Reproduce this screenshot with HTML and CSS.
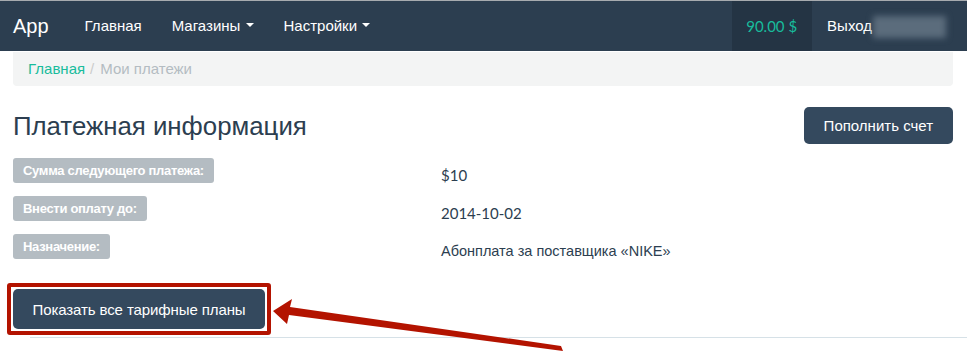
FILE: index.html
```html
<!DOCTYPE html>
<html lang="ru">
<head>
  <meta charset="UTF-8">
  <title>Мои платежи</title>
  <link rel="stylesheet" href="styles.css">
</head>
<body>
  <nav class="navbar">
    <a class="brand" href="#">App</a>
    <ul class="nav">
      <li><a href="#">Главная</a></li>
      <li><a href="#">Магазины <span class="caret"></span></a></li>
      <li><a href="#">Настройки <span class="caret"></span></a></li>
    </ul>
    <ul class="nav nav-right">
      <li class="balance"><a href="#">90.00 $</a></li>
      <li><a href="#">Выход<span class="blurred"></span></a></li>
    </ul>
  </nav>

  <div class="container">
    <ol class="breadcrumb">
      <li><a href="#">Главная</a></li>
      <li class="active">Мои платежи</li>
    </ol>

    <div class="page-head">
      <h1>Платежная информация</h1>
      <button class="btn">Пополнить счет</button>
    </div>

    <div class="details">
      <div class="label-cell"><span class="label">Сумма следующего платежа:</span></div>
      <div class="value num">$10</div>
      <div class="label-cell"><span class="label">Внести оплату до:</span></div>
      <div class="value num">2014-10-02</div>
      <div class="label-cell"><span class="label">Назначение:</span></div>
      <div class="value">Абонплата за поставщика «NIKE»</div>
    </div>

    <div class="highlight">
      <button class="btn">Показать все тарифные планы</button>
    </div>
  </div>

  <div class="rule"></div>

  <!-- annotation arrow -->
  <svg class="arrow" width="967" height="353" viewBox="0 0 967 353">
    <polygon fill="#b31300" points="273,311 292,299 290,307 561,346 563,351 289,315 287,324"/>
  </svg>
</body>
</html>
```

FILE: styles.css
```css
body {
  margin: 0;
  font-family: 'Liberation Sans', Arial, sans-serif;
  font-size: 15px;
  color: #2c3e50;
  background: #fff;
  position: relative;
  height: 353px;
  overflow: hidden;
}
a {
  text-decoration: none;
}
.navbar {
  display: flex;
  align-items: stretch;
  height: 50px;
  background: #2c3e50;
  border-top: 1px solid #a7abaf;
}
.brand {
  color: #fff;
  font-size: 20px;
  line-height: 50px;
  padding: 0 21px 0 13px;
}
.nav {
  display: flex;
  list-style: none;
  margin: 0;
  padding: 0;
}
.nav a {
  display: block;
  color: #fff;
  line-height: 50px;
  padding: 0 15px;
}
.nav-right {
  margin-left: auto;
  margin-right: 6px;
}
.balance a {
  background: #243444;
  color: #18bc9c;
  font-family: Lato, 'Liberation Sans', sans-serif;
  padding: 0 15px 0 14px;
}
.caret {
  display: inline-block;
  width: 0;
  height: 0;
  margin-left: 1px;
  vertical-align: middle;
  border-top: 4px solid #fff;
  border-left: 4px solid transparent;
  border-right: 4px solid transparent;
  position: relative;
  top: -2px;
}
.blurred {
  display: inline-block;
  width: 73px;
  height: 22px;
  margin-left: 1px;
  vertical-align: middle;
  background: #5b6c7c;
  filter: blur(3px);
}
.container {
  margin: 0 14px 0 13px;
}
.breadcrumb {
  display: flex;
  list-style: none;
  margin: 1px 0 0;
  padding: 0 15px;
  height: 34px;
  line-height: 34px;
  background: #f3f4f4;
  border-radius: 0 0 4px 4px;
}
.breadcrumb a {
  color: #18bc9c;
}
.breadcrumb .active {
  color: #b4bcc2;
}
.breadcrumb .active::before {
  content: "/";
  padding: 0 6px 0 5px;
  color: #ccc;
}
.page-head {
  display: flex;
  justify-content: space-between;
  align-items: flex-start;
  margin-top: 21px;
}
h1 {
  margin: 1px 0 0;
  font-size: 25.8px;
  font-weight: normal;
  line-height: 37px;
  color: #2c3e50;
}
.btn {
  font-family: 'Liberation Sans', Arial, sans-serif;
  font-size: 15px;
  color: #fff;
  background: #34495e;
  border: none;
  border-radius: 5px;
  height: 37px;
  padding: 0 20px;
  white-space: nowrap;
  cursor: pointer;
}
.details {
  display: grid;
  grid-template-columns: 428px 1fr;
  grid-auto-rows: 38px;
  margin-top: 13px;
}
.label {
  display: inline-block;
  background: #b4bcc2;
  color: #fff;
  font-size: 13px;
  font-weight: bold;
  letter-spacing: -0.3px;
  height: 25px;
  line-height: 25px;
  padding: 0 10px;
  border-radius: 3px;
}
.value {
  padding-top: 7px;
  line-height: 20px;
  font-size: 14.5px;
  color: #2c3e50;
}
.num {
  font-family: Lato, 'Liberation Sans', sans-serif;
  font-size: 15px;
}
.highlight {
  display: inline-block;
  margin: 11px 0 0 -6px;
  padding: 2px;
  border: 4px solid #b31300;
  border-radius: 3px;
}
.highlight .btn {
  display: block;
  width: 252px;
  height: 40px;
  padding: 0;
  letter-spacing: -0.1px;
}
.rule {
  margin: 2px 0 0 30px;
  border-top: 1px solid #d6e1e7;
}
.arrow {
  position: absolute;
  left: 0;
  top: 0;
}
```
